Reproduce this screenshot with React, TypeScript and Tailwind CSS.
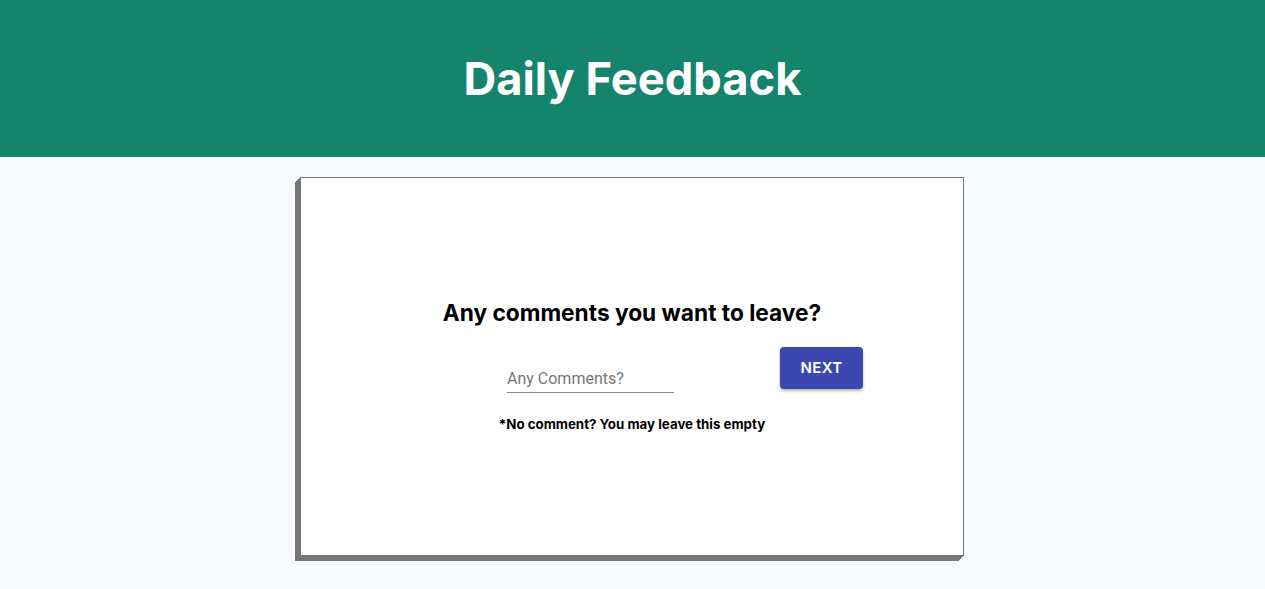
import React, { useState } from 'react';

const App = () => {
  const [comment, setComment] = useState('');

  return (
    <div className="min-h-[589px] bg-[#f7fbff] font-['Inter',sans-serif]">
      <header className="h-[157px] bg-[#14846c] flex items-center justify-center">
        <h1 className="text-[45.3px] font-bold text-white leading-none">Daily Feedback</h1>
      </header>

      <div className="flex justify-center pt-5">
        <div className="mr-[1px] w-[664px] h-[379px] bg-white border border-[#777] shadow-[-1px_1px_0_#777,-2px_2px_0_#777,-3px_3px_0_#777,-4px_4px_0_#777,-5px_5px_0_#777] flex flex-col items-center pt-[121px]">
          <h2 className="text-[22.7px] font-bold text-black leading-7">Any comments you want to leave?</h2>

          <div className="flex items-start pl-[106px] mt-[20px]">
            <div className="w-[167px] pt-[18px]">
              <input
                value={comment}
                onChange={(e) => setComment(e.target.value)}
                placeholder="Any Comments?"
                className="w-full h-[28px] bg-transparent border-b border-[#8a8a8a] text-[16px] font-['Roboto',sans-serif] text-[#333] placeholder:text-[#777] outline-none"
              />
            </div>
            <button className="ml-[106px] w-[83px] h-[42px] rounded-[4px] bg-[#3a48b0] text-white text-[15px] font-semibold font-['Inter',sans-serif] tracking-[0.3px] shadow-[0_2px_3px_rgba(0,0,0,0.3)]">
              NEXT
            </button>
          </div>

          <p className="mt-[22px] text-[13.3px] font-bold text-black">*No comment? You may leave this empty</p>
        </div>
      </div>
    </div>
  );
};

export default App;
